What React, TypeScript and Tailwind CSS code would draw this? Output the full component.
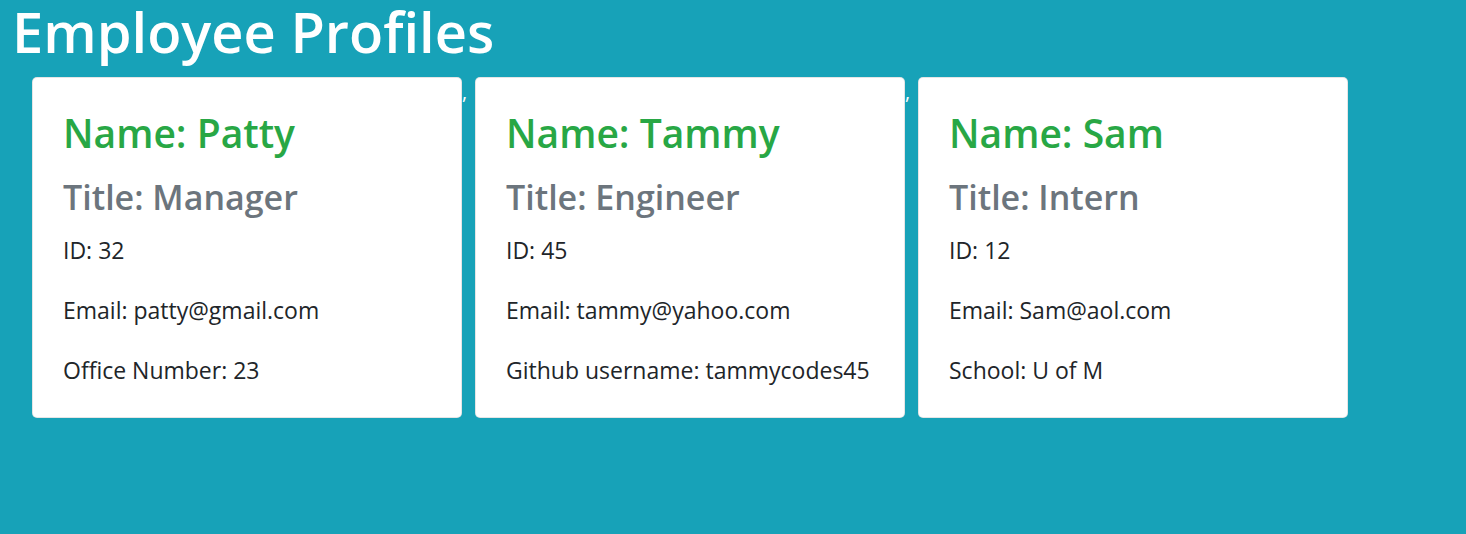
const employees = [
  { name: "Patty", title: "Manager", id: 32, email: "patty@gmail.com", extra: "Office Number: 23" },
  { name: "Tammy", title: "Engineer", id: 45, email: "tammy@yahoo.com", extra: "Github username: tammycodes45" },
  { name: "Sam", title: "Intern", id: 12, email: "Sam@aol.com", extra: "School: U of M" },
];

function EmployeeCard({ emp }: { emp: (typeof employees)[number] }) {
  return (
    <div className="w-[430px] shrink-0 rounded-[5px] border border-black/10 bg-white pl-[30px] pr-[25px] pt-[31px] pb-[32px]">
      <h2 className="mb-[19px] text-[39px] leading-[48px] font-semibold text-[#28a745]">Name: {emp.name}</h2>
      <h3 className="mb-[17px] text-[34px] leading-[42px] font-semibold text-[#6c757d]">Title: {emp.title}</h3>
      <p className="text-[23px] leading-[30px] text-[#212529]">ID: {emp.id}</p>
      <p className="mt-[30px] text-[23px] leading-[30px] text-[#212529]">Email: {emp.email}</p>
      <p className="mt-[30px] text-[23px] leading-[30px] text-[#212529]">{emp.extra}</p>
    </div>
  );
}

export default function App() {
  return (
    <div className="min-h-[534px] w-full bg-[#17a2b8] font-['Open_Sans',sans-serif]">
      <h1 className="pl-[12px] pt-[1px] text-[56px] leading-[60px] font-semibold text-white">Employee Profiles</h1>
      <div className="mt-[16px] flex items-start pl-[32px]">
        {employees.map((emp, i) => (
          <div key={emp.id} className="flex items-start">
            <EmployeeCard emp={emp} />
            {i < employees.length - 1 && (
              <span className="w-[13px] text-[20px] leading-[30px] text-white">,</span>
            )}
          </div>
        ))}
      </div>
    </div>
  );
}
